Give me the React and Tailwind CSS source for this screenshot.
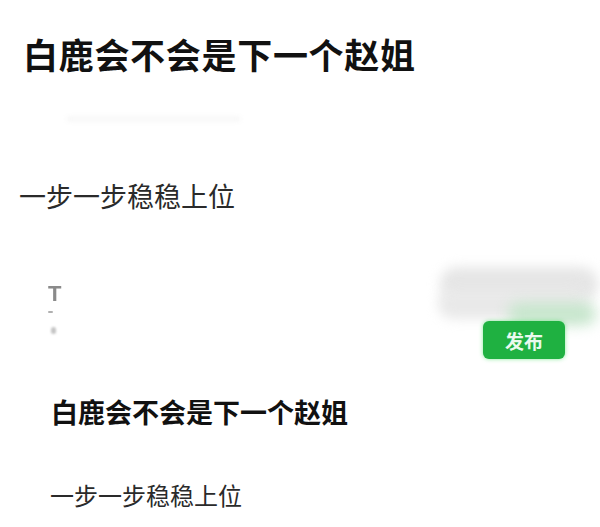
export default function App() {
  return (
    <div className="w-[600px] h-[527px] bg-white overflow-hidden font-['Noto_Sans_CJK_SC','Noto_Sans',sans-serif]">
      <h1 className="pl-[23px] pt-[36px] text-[35px] tracking-[0.7px] leading-none font-bold text-[#111]">
        白鹿会不会是下一个赵姐
      </h1>
      <div className="ml-[66px] mt-[45px] h-[6px] w-[175px] rounded-full bg-[#f8f8f8] blur-[2px]" />
      <p className="pl-[19px] mt-[60px] text-[27px] leading-none text-[#2a2a2a]">
        一步一步稳稳上位
      </p>
      <div className="mt-[50px] flex h-[110px] justify-between">
        <div className="pl-[48px] pt-[24px] flex flex-col items-start">
          <span className="text-[22px] leading-none font-bold text-[#8a8a8a] blur-[0.7px] font-['Liberation_Sans',sans-serif]">T</span>
          <span className="mt-[6px] ml-[0px] h-[2px] w-[5px] rounded-full bg-[#b0b0b0] blur-[0.5px]" />
          <span className="mt-[14px] ml-[3px] h-[7px] w-[5px] rounded-full bg-[#c4c4c4] blur-[1px]" />
        </div>
        <div className="relative w-[180px] pr-[35px] pt-[62px] flex justify-end">
          <div className="absolute left-[20px] top-[8px] h-[34px] w-[158px] rounded-full bg-[#e6e6e6] blur-[6px]" />
          <div className="absolute left-[18px] top-[30px] h-[30px] w-[150px] rounded-full bg-[#e9e9e9] blur-[6px]" />
          <div className="absolute left-[88px] top-[44px] h-[22px] w-[88px] rounded-full bg-[#c6e6cc] blur-[7px]" />
          <button className="relative h-[38px] w-[82px] rounded-[6px] bg-[#1fb141] text-[19px] font-semibold text-[#eafaee] leading-none shadow-[0_0_4px_rgba(60,220,90,0.6)]">
            发布
          </button>
        </div>
      </div>
      <h2 className="pl-[51px] mt-[29px] text-[27px] leading-none font-bold text-[#111]">
        白鹿会不会是下一个赵姐
      </h2>
      <p className="pl-[50px] mt-[58px] text-[24px] leading-none text-[#2a2a2a]">
        一步一步稳稳上位
      </p>
    </div>
  );
}
